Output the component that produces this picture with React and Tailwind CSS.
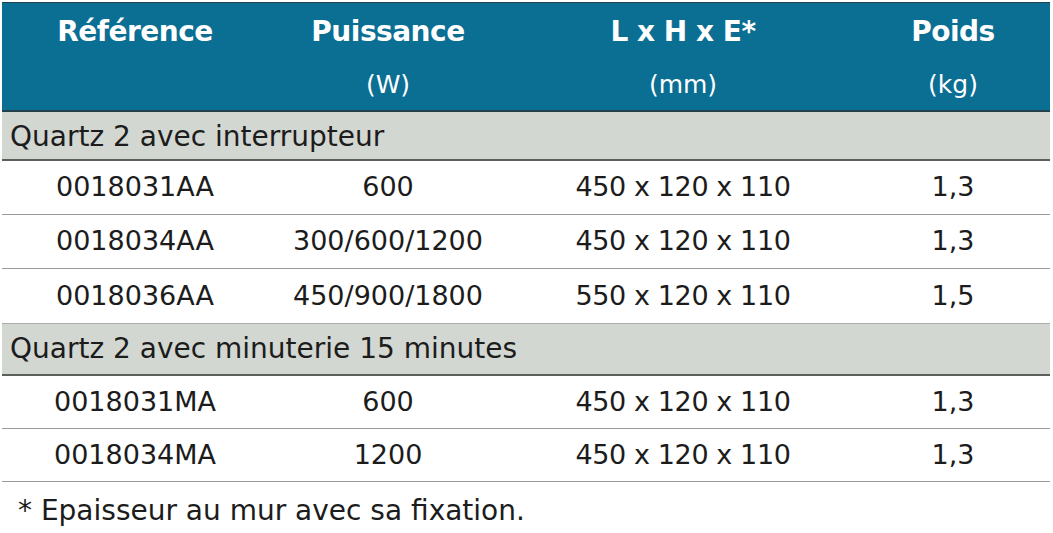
import React from 'react';

const sections = [
  {
    title: 'Quartz 2 avec interrupteur',
    height: 'h-[49px] pt-[3px]',
    rowHeight: 'h-[54px]',
    rows: [
      ['0018031AA', '600', '450 x 120 x 110', '1,3'],
      ['0018034AA', '300/600/1200', '450 x 120 x 110', '1,3'],
      ['0018036AA', '450/900/1800', '550 x 120 x 110', '1,5'],
    ],
  },
  {
    title: 'Quartz 2 avec minuterie 15 minutes',
    height: 'h-[53px] border-t border-t-[#a9aca8]',
    rowHeight: 'h-[53px]',
    rows: [
      ['0018031MA', '600', '450 x 120 x 110', '1,3'],
      ['0018034MA', '1200', '450 x 120 x 110', '1,3'],
    ],
  },
];

const cols = 'grid grid-cols-[266px_240px_350px_190px]';

const App = () => {
  return (
    <div className="w-[1053px] h-[533px] bg-white pt-[2px] pl-[2px] text-[#1c1c1c] font-['DejaVu_Sans',sans-serif] overflow-hidden">
      <div className="w-[1048px]">
        {/* Header */}
        <div className="bg-[#0b6e93] text-white border-t border-b-2 border-[#23414d]">
          <div className={`${cols} h-[58px] items-center text-[28px] font-bold tracking-[-0.5px]`}>
            <div className="text-center">Référence</div>
            <div className="text-center">Puissance</div>
            <div className="text-center">L x H x E*</div>
            <div className="text-center">Poids</div>
          </div>
          <div className={`${cols} h-[49px] items-center text-[25px] pb-[2px]`}>
            <div></div>
            <div className="text-center">(W)</div>
            <div className="text-center">(mm)</div>
            <div className="text-center">(kg)</div>
          </div>
        </div>

        {sections.map((s, i) => (
          <div key={s.title}>
            <div className={`bg-[#d3d7d1] ${s.height} flex items-center pl-[8px] text-[28px] border-b-2 border-b-[#5c5f5c]`}>
              {s.title}
            </div>
            {s.rows.map((r, j) => (
              <div
                key={r[0]}
                className={`${cols} ${s.rowHeight} items-center text-[27px] ${j < s.rows.length - 1 || i === sections.length - 1 ? 'border-b border-[#9a9a9a]' : ''}`}
              >
                <div className="text-center">{r[0]}</div>
                <div className="text-center">{r[1]}</div>
                <div className="text-center tracking-[-0.4px]">{r[2]}</div>
                <div className="text-center">{r[3]}</div>
              </div>
            ))}
          </div>
        ))}

        <div className="pl-[16px] pt-[8px] text-[28px]">* Epaisseur au mur avec sa fixation.</div>
      </div>
    </div>
  );
};

export default App;
